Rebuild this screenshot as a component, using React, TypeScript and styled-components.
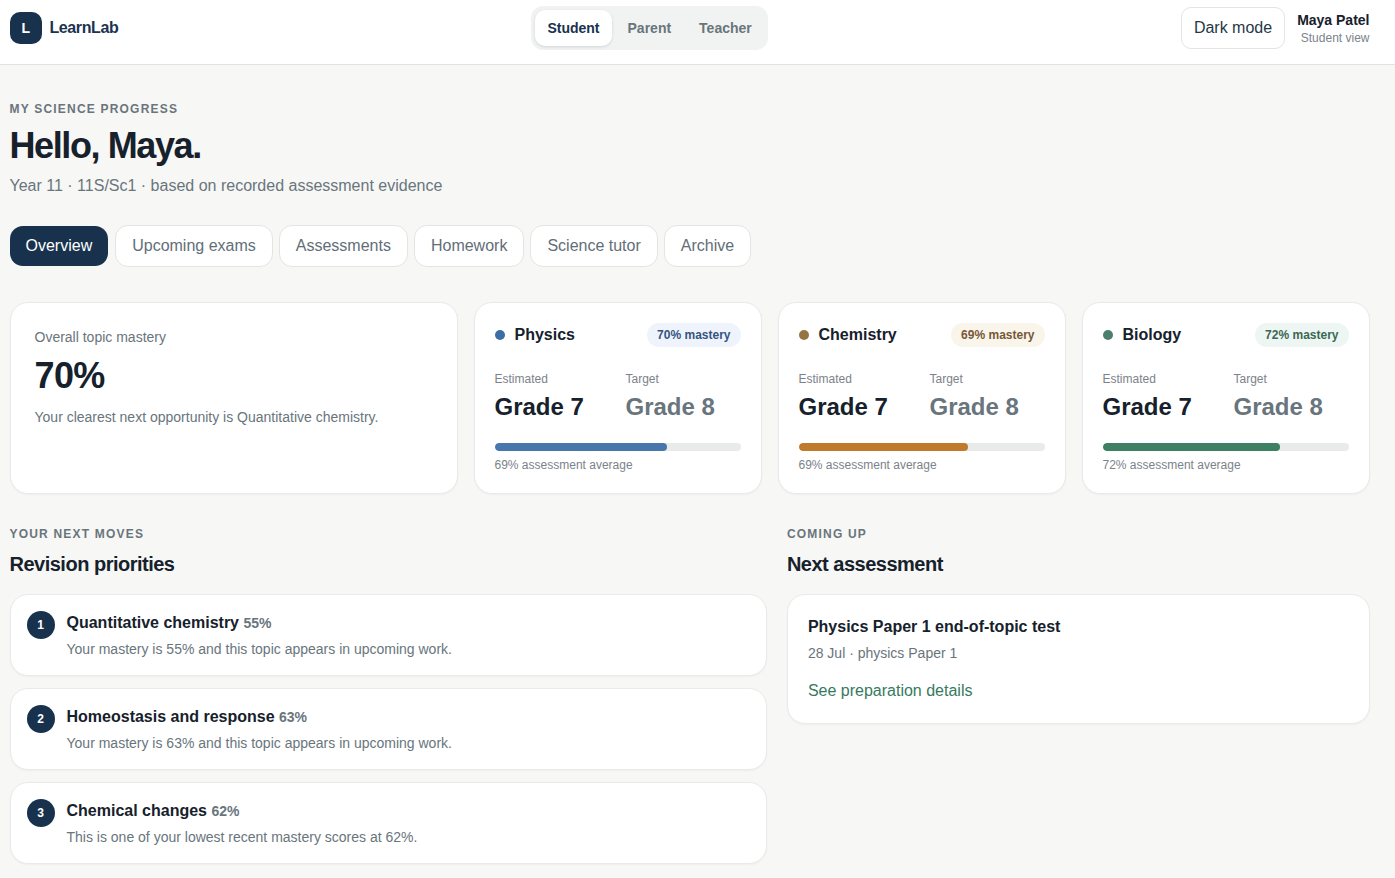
import React from "react";
import styled, { createGlobalStyle } from "styled-components";

const GlobalStyle = createGlobalStyle`
  *, *::before, *::after { box-sizing: border-box; }
  body {
    margin: 0;
    background: #f7f7f5;
    color: #16212c;
    font-family: "Liberation Sans", Arial, sans-serif;
    font-size: 16px;
    line-height: 24px;
  }
  h1, h2, h3, p, ol { margin: 0; padding: 0; }
  button { font: inherit; cursor: pointer; }
`;

const Page = styled.div`
  height: 878px;
  overflow: hidden;
`;

const Header = styled.header`
  height: 65px;
  padding: 0 25.5px 8px 9.5px;
  display: flex;
  justify-content: space-between;
  align-items: center;
  background: #fff;
  border-bottom: 1px solid #e2e4e3;
`;

const Brand = styled.div`
  display: flex;
  align-items: center;
  gap: 8px;
  color: #1b3350;
  font-weight: 700;
  letter-spacing: -0.4px;
`;

const Logo = styled.span`
  width: 32px;
  height: 32px;
  display: grid;
  place-items: center;
  border-radius: 10px;
  background: #18324e;
  color: #fff;
  font-size: 14px;
`;

const RoleSwitch = styled.div`
  display: flex;
  gap: 4px;
  padding: 4px;
  border-radius: 12px;
  background: #f1f3f2;
`;

const RoleButton = styled.button<{ $active?: boolean }>`
  height: 36px;
  padding: 0 12px;
  border: 0;
  border-radius: 10px;
  background: ${(p) => (p.$active ? "#fff" : "transparent")};
  color: ${(p) => (p.$active ? "#18324e" : "#69757c")};
  box-shadow: ${(p) => (p.$active ? "0 1px 3px rgba(20, 35, 50, 0.14)" : "none")};
  font-size: 14px;
  font-weight: 700;
`;

const Account = styled.div`
  display: flex;
  justify-content: flex-end;
  align-items: center;
  gap: 12px;
`;

const ThemeButton = styled.button`
  height: 42px;
  padding: 0 12px;
  border: 1px solid #e2e5e5;
  border-radius: 10px;
  background: #fff;
  color: #263847;
`;

const User = styled.div`
  display: flex;
  flex-direction: column;
  text-align: right;
`;

const UserName = styled.span`
  font-size: 14px;
  font-weight: 700;
  line-height: 20px;
`;

const UserRole = styled.span`
  color: #7c838b;
  font-size: 12px;
  line-height: 16px;
`;

const Main = styled.main`
  padding: 36px 25.5px 0 9.5px;
`;

const Eyebrow = styled.p`
  color: #69757c;
  font-size: 12px;
  font-weight: 700;
  line-height: 16px;
  letter-spacing: 1.2px;
  text-transform: uppercase;
`;

const Title = styled.h1`
  margin-top: 9px;
  font-size: 36px;
  line-height: 40px;
  letter-spacing: -1.4px;
`;

const Subtitle = styled.p`
  margin-top: 8px;
  color: #69757c;
`;

const Tabs = styled.nav`
  margin-top: 27px;
  display: flex;
  align-items: center;
  gap: 6px;
`;

const Tab = styled.button<{ $active?: boolean }>`
  height: ${(p) => (p.$active ? 40 : 42)}px;
  margin-right: ${(p) => (p.$active ? 1 : 0)}px;
  padding: 0 16px;
  border: ${(p) => (p.$active ? "0" : "1px solid #e3e5e4")};
  border-radius: 13px;
  background: ${(p) => (p.$active ? "#18324e" : "#fff")};
  color: ${(p) => (p.$active ? "#fff" : "#626e77")};
`;

const Card = styled.section`
  border: 1px solid #e9eae9;
  border-radius: 18px;
  background: #fff;
  box-shadow: 0 1px 2px rgba(20, 35, 50, 0.04);
`;

const Summary = styled.div`
  margin-top: 35px;
  display: grid;
  grid-template-columns: 448px repeat(3, 1fr);
  gap: 16px;
`;

const OverallCard = styled(Card)`
  padding: 24px;
`;

const Muted = styled.p`
  color: #69757c;
  font-size: 14px;
  line-height: 20px;
`;

const BigNumber = styled.p`
  margin: 9px 0 11px;
  font-size: 36px;
  font-weight: 700;
  line-height: 40px;
  letter-spacing: -0.6px;
`;

const SubjectCard = styled(Card)`
  padding: 20px;
`;

const SubjectHead = styled.div`
  display: flex;
  justify-content: space-between;
  align-items: center;
`;

const SubjectName = styled.h3`
  display: flex;
  align-items: center;
  gap: 10px;
  font-size: 16px;
`;

const Dot = styled.span<{ $color: string }>`
  width: 10px;
  height: 10px;
  border-radius: 50%;
  background: ${(p) => p.$color};
`;

const Pill = styled.span<{ $ink: string; $tint: string }>`
  padding: 4px 10px;
  border-radius: 12px;
  background: ${(p) => p.$tint};
  color: ${(p) => p.$ink};
  font-size: 12px;
  font-weight: 700;
  line-height: 16px;
`;

const Grades = styled.div`
  margin-top: 24px;
  display: grid;
  grid-template-columns: 1fr 1fr;
  gap: 16px;
`;

const Caption = styled.p`
  color: #7b828a;
  font-size: 12px;
  line-height: 16px;
`;

const Grade = styled.p<{ $target?: boolean }>`
  margin-top: 4px;
  color: ${(p) => (p.$target ? "#69757c" : "inherit")};
  font-size: 24px;
  font-weight: 700;
  line-height: 32px;
`;

const Track = styled.div`
  height: 8px;
  margin: 20px 0 6px;
  border-radius: 4px;
  background: #e9eaea;
  overflow: hidden;
`;

const Fill = styled.div<{ $color: string }>`
  height: 100%;
  border-radius: 4px;
  background: ${(p) => p.$color};
`;

const Columns = styled.div`
  margin-top: 32px;
  display: grid;
  grid-template-columns: 1.3fr 1fr;
  gap: 20px;
`;

const SectionTitle = styled.h2`
  margin: 8px 0 16px;
  font-size: 20px;
  line-height: 28px;
  letter-spacing: -0.5px;
`;

const PriorityList = styled.div`
  display: flex;
  flex-direction: column;
  gap: 12px;
`;

const PriorityCard = styled(Card)`
  display: flex;
  gap: 12px;
  padding: 16px;
`;

const Rank = styled.span`
  width: 28px;
  height: 28px;
  display: grid;
  place-items: center;
  border-radius: 50%;
  background: #18324e;
  color: #fff;
  font-size: 12px;
  font-weight: 700;
`;

const ItemTitle = styled.h3`
  font-size: 16px;
  line-height: 24px;
`;

const Score = styled.span`
  color: #69757c;
  font-size: 14px;
`;

const ItemText = styled(Muted)`
  margin-top: 4px;
`;

const AssessmentCard = styled(Card)`
  padding: 20px;
`;

const DetailsLink = styled.a`
  display: block;
  margin-top: 16px;
  color: #357a5e;
`;

const roles = ["Student", "Parent", "Teacher"];
const tabs = ["Overview", "Upcoming exams", "Assessments", "Homework", "Science tutor", "Archive"];

const subjects = [
  { name: "Physics", mastery: 70, average: 69, dot: "#3d6da5", bar: "#4777ab", ink: "#345580", tint: "#eff4fc" },
  { name: "Chemistry", mastery: 69, average: 69, dot: "#967342", bar: "#c07a2b", ink: "#765838", tint: "#faf5eb" },
  { name: "Biology", mastery: 72, average: 72, dot: "#4c7f6b", bar: "#3d8063", ink: "#3c6854", tint: "#edf6f2" },
];

const priorities = [
  { topic: "Quantitative chemistry", score: 55, text: "Your mastery is 55% and this topic appears in upcoming work." },
  { topic: "Homeostasis and response", score: 63, text: "Your mastery is 63% and this topic appears in upcoming work." },
  { topic: "Chemical changes", score: 62, text: "This is one of your lowest recent mastery scores at 62%." },
];

export default function App() {
  return (
    <Page>
      <GlobalStyle />
      <Header>
        <Brand>
          <Logo>L</Logo>
          LearnLab
        </Brand>
        <RoleSwitch>
          {roles.map((role, i) => (
            <RoleButton key={role} $active={i === 0}>
              {role}
            </RoleButton>
          ))}
        </RoleSwitch>
        <Account>
          <ThemeButton>Dark mode</ThemeButton>
          <User>
            <UserName>Maya Patel</UserName>
            <UserRole>Student view</UserRole>
          </User>
        </Account>
      </Header>
      <Main>
        <Eyebrow>My science progress</Eyebrow>
        <Title>Hello, Maya.</Title>
        <Subtitle>Year 11 · 11S/Sc1 · based on recorded assessment evidence</Subtitle>
        <Tabs>
          {tabs.map((tab, i) => (
            <Tab key={tab} $active={i === 0}>
              {tab}
            </Tab>
          ))}
        </Tabs>
        <Summary>
          <OverallCard>
            <Muted>Overall topic mastery</Muted>
            <BigNumber>70%</BigNumber>
            <Muted>Your clearest next opportunity is Quantitative chemistry.</Muted>
          </OverallCard>
          {subjects.map((s) => (
            <SubjectCard key={s.name}>
              <SubjectHead>
                <SubjectName>
                  <Dot $color={s.dot} />
                  {s.name}
                </SubjectName>
                <Pill $ink={s.ink} $tint={s.tint}>
                  {s.mastery}% mastery
                </Pill>
              </SubjectHead>
              <Grades>
                <div>
                  <Caption>Estimated</Caption>
                  <Grade>Grade 7</Grade>
                </div>
                <div>
                  <Caption>Target</Caption>
                  <Grade $target>Grade 8</Grade>
                </div>
              </Grades>
              <Track>
                <Fill $color={s.bar} style={{ width: `${s.mastery}%` }} />
              </Track>
              <Caption>{s.average}% assessment average</Caption>
            </SubjectCard>
          ))}
        </Summary>
        <Columns>
          <div>
            <Eyebrow>Your next moves</Eyebrow>
            <SectionTitle>Revision priorities</SectionTitle>
            <PriorityList>
              {priorities.map((p, i) => (
                <PriorityCard key={p.topic}>
                  <Rank>{i + 1}</Rank>
                  <div>
                    <ItemTitle>
                      {p.topic} <Score>{p.score}%</Score>
                    </ItemTitle>
                    <ItemText>{p.text}</ItemText>
                  </div>
                </PriorityCard>
              ))}
            </PriorityList>
          </div>
          <div>
            <Eyebrow>Coming up</Eyebrow>
            <SectionTitle>Next assessment</SectionTitle>
            <AssessmentCard>
              <ItemTitle>Physics Paper 1 end-of-topic test</ItemTitle>
              <ItemText>28 Jul · physics Paper 1</ItemText>
              <DetailsLink>See preparation details</DetailsLink>
            </AssessmentCard>
          </div>
        </Columns>
      </Main>
    </Page>
  );
}
